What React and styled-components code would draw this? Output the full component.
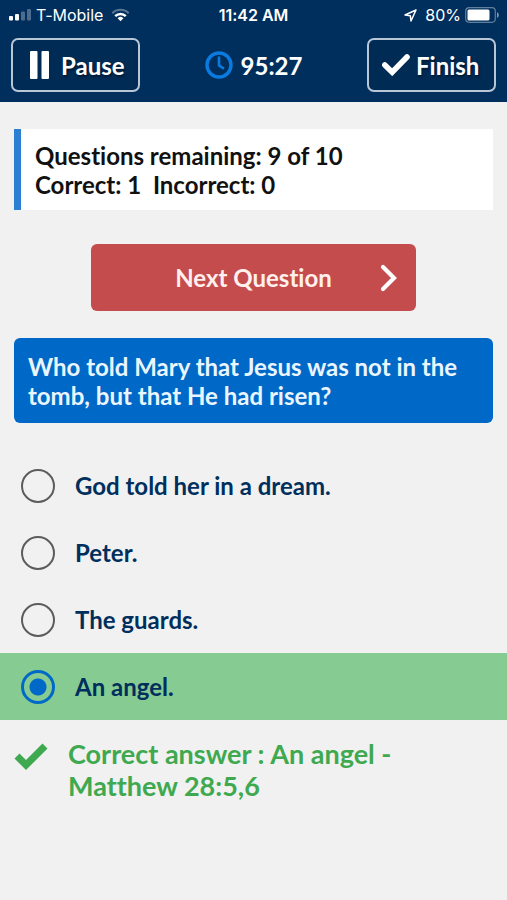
import React, { useState } from "react";
import styled, { createGlobalStyle } from "styled-components";

const answers = ["God told her in a dream.", "Peter.", "The guards.", "An angel."];
const correctAnswer = "An angel.";

function StatusBar() {
  return (
    <StatusBarWrap>
      <StatusGroup>
        <svg width="24" height="12" viewBox="0 0 24 12" fill="#fff">
          <rect x="1" y="7" width="4" height="4.5" rx="1" />
          <rect x="7" y="5" width="4" height="6.5" rx="1" />
          <rect x="13" y="2.5" width="4" height="9" rx="1" opacity="0.3" />
          <rect x="19" y="0" width="4" height="11.5" rx="1" opacity="0.3" />
        </svg>
        <StatusText>T-Mobile</StatusText>
        <WifiIcon width="19" height="14" viewBox="0 0 19 14" fill="none" stroke="#fff">
          <path d="M1.3 5.2a11.6 11.6 0 0 1 16.4 0" strokeWidth="2" opacity="0.35" />
          <path d="M4.2 8.2a7.5 7.5 0 0 1 10.6 0" strokeWidth="2.4" />
          <path d="M9.5 13.2l-2.9-2.9a4.1 4.1 0 0 1 5.8 0z" fill="#fff" stroke="none" />
        </WifiIcon>
      </StatusGroup>
      <StatusTime>11:42 AM</StatusTime>
      <StatusGroup $end>
        <LocationIcon width="13" height="13" viewBox="0 0 13 13" fill="none">
          <path
            d="M12 1L1 6l5.3.7L7 12z"
            stroke="#fff"
            strokeWidth="1.5"
            strokeLinejoin="round"
          />
        </LocationIcon>
        <StatusText>80%</StatusText>
        <svg width="34" height="16" viewBox="0 0 34 16">
          <rect x="0.7" y="0.7" width="29.6" height="14.6" rx="3.5" fill="none" stroke="#5f7f9c" strokeWidth="1.2" />
          <rect x="2.5" y="2.5" width="22" height="11" rx="1.5" fill="#fff" />
          <path d="M32 5.2c2.4.7 2.4 4.9 0 5.6z" fill="#7f97ad" />
        </svg>
      </StatusGroup>
    </StatusBarWrap>
  );
}

function App() {
  const [selected, setSelected] = useState(correctAnswer);

  return (
    <>
      <GlobalStyle />
      <Header>
        <StatusBar />
        <Toolbar>
          <HeaderButton type="button">
            <svg width="19" height="28" viewBox="0 0 19 28" fill="#fff">
              <rect x="0" y="0" width="7.5" height="28" rx="1" />
              <rect x="11.5" y="0" width="7.5" height="28" rx="1" />
            </svg>
            Pause
          </HeaderButton>
          <Timer>
            <svg width="28" height="28" viewBox="0 0 28 28" fill="none" stroke="#0a7be0">
              <circle cx="14" cy="14" r="12" strokeWidth="3.4" />
              <path d="M14 5.5v9l5 3.2" strokeWidth="2.6" />
            </svg>
            95:27
          </Timer>
          <HeaderButton type="button" $end>
            <svg width="28" height="22" viewBox="0 0 28 22" fill="none">
              <path d="M2.8 11l7.4 7.2L25 3" stroke="#fff" strokeWidth="5.6" strokeLinecap="round" />
            </svg>
            Finish
          </HeaderButton>
        </Toolbar>
      </Header>

      <Summary>
        <p>Questions remaining: 9 of 10</p>
        <p>Correct: 1&nbsp; Incorrect: 0</p>
      </Summary>

      <NextButton type="button">
        Next Question
        <NextArrow width="18" height="28" viewBox="0 0 18 28" fill="none">
          <path d="M3 3l11 11L3 25" stroke="#fff" strokeWidth="4.2" strokeLinecap="round" />
        </NextArrow>
      </NextButton>

      <AnswerForm>
        <Question>Who told Mary that Jesus was not in the tomb, but that He had risen?</Question>
        {answers.map((answer) => (
          <AnswerRow key={answer} $correct={answer === selected && answer === correctAnswer}>
            <Radio
              name="answer"
              value={answer}
              checked={answer === selected}
              onChange={() => setSelected(answer)}
            />
            {answer}
          </AnswerRow>
        ))}
      </AnswerForm>

      <Feedback>
        <svg width="34" height="28" viewBox="0 0 34 28">
          <path d="M0.5 15.5L5.5 10.5L12 17L28.5 0.5L33.5 5.5L12 27z" fill="#3fa94f" />
        </svg>
        <p>Correct answer : An angel - Matthew 28:5,6</p>
      </Feedback>
    </>
  );
}

export default App;

const GlobalStyle = createGlobalStyle`
  * {
    box-sizing: border-box;
  }

  body {
    margin: 0;
    background: #f1f1f1;
    font-family: Lato, "Open Sans", sans-serif;
    font-size: 24px;
    font-weight: 700;
    font-variant-ligatures: none;
    line-height: 29px;
  }

  p {
    margin: 0;
  }

  svg {
    flex-shrink: 0;
  }
`;

const Header = styled.header`
  background: #002f5d;
  color: #fff;
  padding-bottom: 10px;
`;

const StatusBarWrap = styled.div`
  display: grid;
  grid-template-columns: 1fr auto 1fr;
  align-items: center;
  height: 30px;
  padding: 0 8px;
  font-family: Inter, sans-serif;
  font-size: 16px;
  line-height: 20px;
`;

const StatusGroup = styled.div`
  display: flex;
  align-items: center;
  justify-content: ${(props) => (props.$end ? "flex-end" : "flex-start")};
  gap: 4px;
`;

const StatusText = styled.span`
  font-weight: 400;
`;

const StatusTime = styled.span`
  font-weight: 600;
`;

const WifiIcon = styled.svg`
  margin-left: 4px;
`;

const LocationIcon = styled.svg`
  margin-right: 4px;
`;

const Toolbar = styled.div`
  display: grid;
  grid-template-columns: 1fr auto 1fr;
  align-items: center;
  padding: 8px 11px 0;
`;

const HeaderButton = styled.button`
  display: flex;
  align-items: center;
  justify-self: ${(props) => (props.$end ? "end" : "start")};
  gap: ${(props) => (props.$end ? "6px" : "12px")};
  height: 54px;
  min-width: 129px;
  padding: ${(props) => (props.$end ? "0 13px" : "0 12px 0 17px")};
  border: 2px solid #b9c6d6;
  border-radius: 7px;
  background: #002b55;
  color: #fff;
  font: inherit;
  font-variant-ligatures: inherit;
  text-shadow: 1px 2px 2px rgba(0, 0, 0, 0.4);
`;

const Timer = styled.div`
  display: flex;
  align-items: center;
  gap: 8px;
`;

const Summary = styled.section`
  margin: 27px 14px 0;
  padding: 12px 14px 11px;
  border-left: 7px solid #2b80d2;
  background: #fff;
  color: #111;
`;

const NextButton = styled.button`
  position: relative;
  display: block;
  width: 64%;
  height: 67px;
  margin: 34px auto 27px;
  border: 0;
  border-radius: 6px;
  background: #c54c4c;
  color: #fff0ee;
  font: inherit;
  font-variant-ligatures: inherit;
`;

const NextArrow = styled.svg`
  position: absolute;
  top: 50%;
  right: 18px;
  transform: translateY(-50%);
`;

const AnswerForm = styled.fieldset`
  min-width: 0;
  margin: 0;
  padding: 0;
  border: 0;
`;

const Question = styled.legend`
  width: calc(100% - 28px);
  margin: 0 14px 29px;
  padding: 14px 14px 13px;
  border-radius: 6px;
  background: #0069c8;
  color: #eaf6ff;
`;

const AnswerRow = styled.label`
  display: flex;
  align-items: center;
  gap: 20px;
  min-height: 67px;
  padding: 0 21px;
  background: ${(props) => (props.$correct ? "#86cb92" : "transparent")};
  color: #002f5d;
`;

const Radio = styled.input.attrs({ type: "radio" })`
  appearance: none;
  flex-shrink: 0;
  width: 34px;
  height: 34px;
  margin: 0;
  border: 2px solid #5c5c5c;
  border-radius: 50%;

  &:checked {
    border: 3px solid #0069c8;
    background: radial-gradient(circle, #0069c8 8px, transparent 9px);
  }
`;

const Feedback = styled.div`
  display: flex;
  align-items: flex-start;
  gap: 20px;
  padding: 18px 100px 18px 14px;
  color: #3fa94f;
  font-size: 27px;
  line-height: 32px;

  svg {
    margin-top: 5px;
  }
`;
